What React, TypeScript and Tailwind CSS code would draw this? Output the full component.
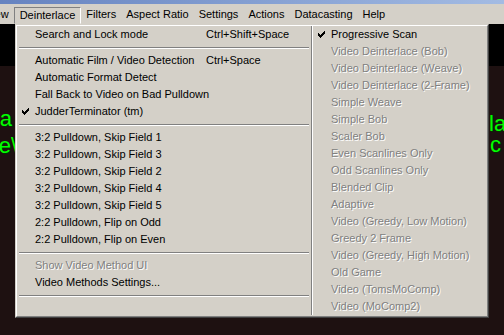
import React from "react";

type Item = { label: string; shortcut?: string; checked?: boolean; disabled?: boolean } | "sep";

const leftItems: Item[] = [
  { label: "Search and Lock mode", shortcut: "Ctrl+Shift+Space" },
  "sep",
  { label: "Automatic Film / Video Detection", shortcut: "Ctrl+Space" },
  { label: "Automatic Format Detect" },
  { label: "Fall Back to Video on Bad Pulldown" },
  { label: "JudderTerminator (tm)", checked: true },
  "sep",
  { label: "3:2 Pulldown, Skip Field 1" },
  { label: "3:2 Pulldown, Skip Field 3" },
  { label: "3:2 Pulldown, Skip Field 2" },
  { label: "3:2 Pulldown, Skip Field 4" },
  { label: "3:2 Pulldown, Skip Field 5" },
  { label: "2:2 Pulldown, Flip on Odd" },
  { label: "2:2 Pulldown, Flip on Even" },
  "sep",
  { label: "Show Video Method UI", disabled: true },
  { label: "Video Methods Settings..." },
  "sep",
];

const rightItems: Item[] = [
  { label: "Progressive Scan", checked: true },
  ...[
    "Video Deinterlace (Bob)",
    "Video Deinterlace (Weave)",
    "Video Deinterlace (2-Frame)",
    "Simple Weave",
    "Simple Bob",
    "Scaler Bob",
    "Even Scanlines Only",
    "Odd Scanlines Only",
    "Blended Clip",
    "Adaptive",
    "Video (Greedy, Low Motion)",
    "Greedy 2 Frame",
    "Video (Greedy, High Motion)",
    "Old Game",
    "Video (TomsMoComp)",
    "Video (MoComp2)",
  ].map((label) => ({ label, disabled: true })),
];

// classic 7x7 tick, pixel by pixel
const Check = () => (
  <svg width="7" height="7" viewBox="0 0 7 7" className="absolute left-[5px] top-[5px]" shapeRendering="crispEdges">
    <path d="M6 0h1v1H6zM5 1h2v1H5zM0 2h1v1H0zM4 2h3v1H4zM0 3h2v1H0zM3 3h3v1H3zM0 4h5v1H0zM1 5h3v1H1zM2 6h1v1H2z" fill="#000" />
  </svg>
);

const MenuColumn = ({ items }: { items: Item[] }) => (
  <div className="flex flex-col">
    {items.map((item, idx) =>
      item === "sep" ? (
        <div key={idx} className="h-[9px] px-[2px] pt-[4px]">
          <div className="h-[2px] border-t border-b border-t-[#808080] border-b-white" />
        </div>
      ) : (
        <div key={idx} className="relative flex h-[17px] items-center pl-[18px] whitespace-nowrap">
          {item.checked && <Check />}
          <span
            className={
              item.disabled
                ? "text-[#808080] [text-shadow:1px_1px_0_#ffffff]"
                : "text-black"
            }
          >
            {item.label}
          </span>
          {item.shortcut && <span className="absolute left-[189px] text-black">{item.shortcut}</span>}
        </div>
      )
    )}
  </div>
);

export default function App() {
  const bar = ["Filters", "Aspect Ratio", "Settings", "Actions", "Datacasting", "Help"];

  return (
    <div className="relative flex h-[335px] w-[504px] flex-col overflow-hidden bg-[#1e1111] font-['Liberation_Sans',Arial,sans-serif] text-[11px] leading-none">
      {/* title bar tail */}
      <div className="h-[4px] bg-gradient-to-r from-[#6683c0] to-[#a3bbe3]" />

      {/* menu bar */}
      <div className="flex h-[20px] items-center bg-[#d4d0c8] text-black">
        <div className="ml-[-20px] px-[5px]">View</div>
        <div className="mt-[3px] flex h-[17px] items-center border border-t-[#808080] border-l-[#808080] border-r-white border-b-transparent px-[5px]">
          Deinterlace
        </div>
        {bar.map((b) => (
          <div key={b} className="px-[5px]">
            {b}
          </div>
        ))}
      </div>

      {/* video area */}
      <div className="h-[42px] bg-black" />
      <div className="flex-1" />

      {/* OSD text peeking out from behind the menu */}
      <div className="absolute right-[492px] top-[108px] text-[22px] leading-[22px] text-[#00ff00] [text-shadow:1px_1px_0_#003000]">a</div>
      <div className="absolute right-[487px] top-[135px] text-[22px] leading-[22px] text-[#00ff00] [text-shadow:1px_1px_0_#003000]">e\</div>
      <div className="absolute left-[489px] top-[113px] text-[22px] leading-[22px] text-[#00ff00] [text-shadow:1px_1px_0_#003000]">la</div>
      <div className="absolute left-[490px] top-[134px] text-[22px] leading-[22px] text-[#00ff00] [text-shadow:1px_1px_0_#003000]">c</div>

      {/* dropdown */}
      <div className="absolute left-[15px] top-[24px] w-[474px] border border-t-[#d4d0c8] border-l-[#d4d0c8] border-r-[#404040] border-b-[#404040] bg-[#d4d0c8]">
        <div className="flex border border-t-white border-l-white border-r-[#808080] border-b-[#808080] pb-[1px]">
          <div className="w-[294px] shrink-0">
            <MenuColumn items={leftItems} />
          </div>
          <div className="w-[2px] shrink-0 border-l border-r border-l-[#808080] border-r-white" />
          <div className="min-w-0 flex-1">
            <MenuColumn items={rightItems} />
          </div>
        </div>
      </div>
    </div>
  );
}
